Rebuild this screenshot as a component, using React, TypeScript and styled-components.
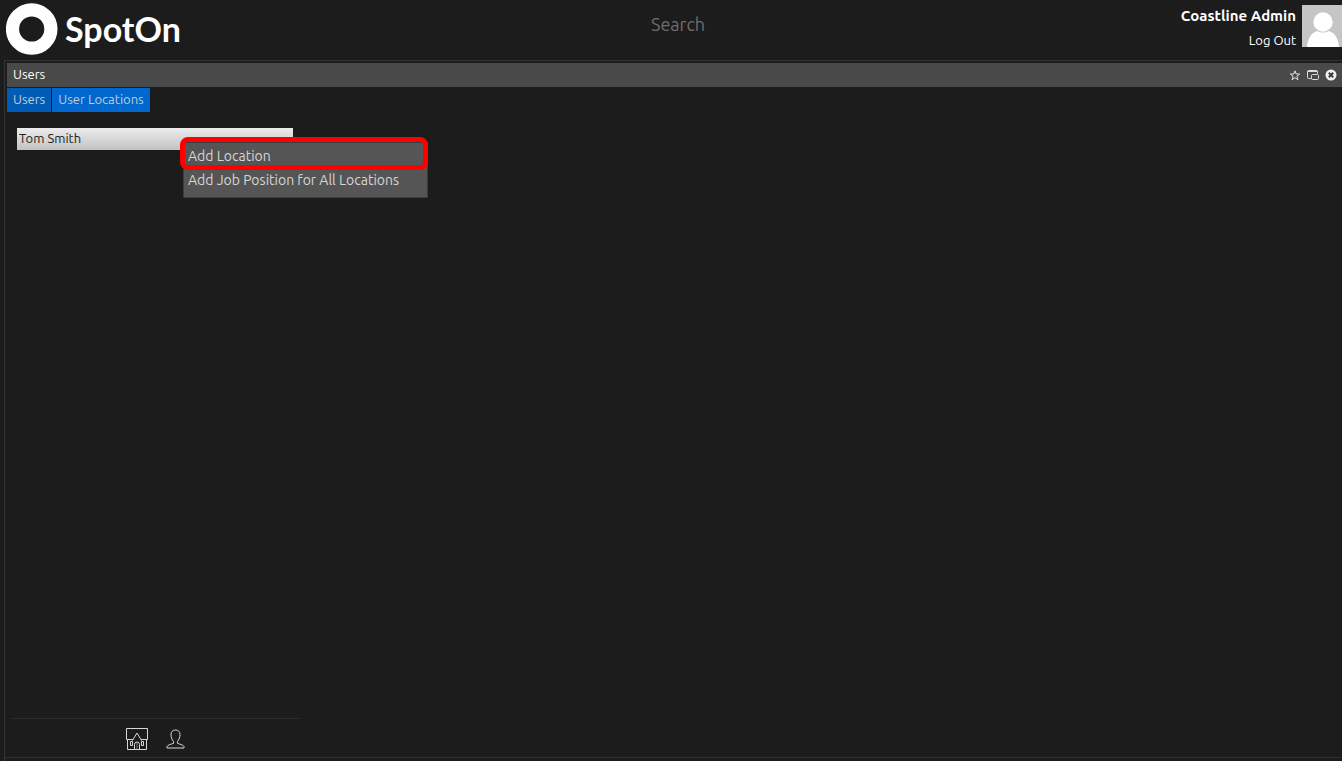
import React from "react";
import styled, { createGlobalStyle } from "styled-components";

const Global = createGlobalStyle`
  * { box-sizing: border-box; }
  body {
    margin: 0;
    background: #1c1c1c;
    color: #fff;
    font-family: Ubuntu, "Noto Sans", "Open Sans", sans-serif;
    font-size: 13px;
    line-height: 24px;
  }
  button, input { font: inherit; color: inherit; border: 0; background: none; padding: 0; margin: 0; }
`;

const Page = styled.div`
  display: flex;
  flex-direction: column;
  min-height: 100vh;
`;

const Header = styled.header`
  display: grid;
  grid-template-columns: 1fr auto 1fr;
  height: 60px;
  padding-left: 6px;
`;

const Brand = styled.a`
  display: flex;
  align-items: center;
  gap: 7px;
  height: 58px;
  color: #fff;
  text-decoration: none;
`;

const Wordmark = styled.span`
  font-family: Lato, sans-serif;
  font-size: 34px;
  font-weight: 700;
  line-height: 40px;
`;

const SearchBox = styled.input`
  width: 300px;
  height: 48px;
  font-size: 18px;
  text-align: center;
  outline: none;
  margin-left: 8px;
  &::placeholder { color: #6e6e6e; opacity: 1; }
`;

const Account = styled.div`
  display: flex;
  justify-content: flex-end;
  gap: 6px;
  padding-top: 4px;
`;

const AccountText = styled.div`
  display: flex;
  flex-direction: column;
  align-items: flex-end;
`;

const AccountName = styled.strong`
  font-size: 15px;
`;

const LogOut = styled.a`
  color: #fff;
  text-decoration: none;
`;

const Panel = styled.main`
  flex: 1;
  display: flex;
  flex-direction: column;
  margin-left: 4px;
  padding: 2px 0 3px;
  border: solid #333;
  border-width: 1px 0 0 1px;
`;

const TitleBar = styled.div`
  display: flex;
  justify-content: space-between;
  height: 24px;
  margin-left: 2px;
  padding: 0 5px 0 6px;
  background: #494949;
`;

const Title = styled.h1`
  margin: 0;
  font-size: 13px;
  font-weight: 400;
  line-height: 22px;
`;

const Tools = styled.div`
  display: flex;
  align-items: center;
  gap: 6px;
`;

const IconButton = styled.button`
  display: flex;
  cursor: pointer;
`;

const Tabs = styled.nav`
  display: flex;
  gap: 1px;
  margin: 1px 0 0 2px;
`;

const Tab = styled.button<{ $active?: boolean }>`
  height: 24px;
  padding: 0 6px 2px;
  line-height: 22px;
  background: ${(p) => (p.$active ? "#005bb5" : "#0067ce")};
  color: #c4ccd4;
`;

const Body = styled.section`
  flex: 1;
  display: flex;
  border-bottom: 1px solid #2e2e2e;
`;

const Sidebar = styled.aside`
  display: flex;
  flex-direction: column;
  width: 294px;
  padding: 16px 0 0 6px;
`;

const UserList = styled.ul`
  flex: 1;
  list-style: none;
  margin: 0;
  padding: 0 6px;
`;

const UserRow = styled.li`
  position: relative;
  height: 22px;
  padding-left: 2px;
  background: linear-gradient(#ececec, #c2c2c2);
  color: #222;
  line-height: 20px;
`;

const Menu = styled.div`
  position: absolute;
  left: 166px;
  top: 14px;
  width: 245px;
  padding: 1px 0 5px;
  background: #555;
  border: 1px solid #3c3c3c;
`;

const MenuItem = styled.button`
  display: block;
  width: 100%;
  height: 24px;
  padding-left: 4px;
  color: #d6d6d6;
  font-size: 14px;
  line-height: 24px;
  text-align: left;
  white-space: nowrap;
`;

const Highlight = styled.div`
  position: absolute;
  left: -4px;
  top: -6px;
  width: 248px;
  height: 33px;
  border: 5px solid #fe0000;
  border-radius: 8px;
  pointer-events: none;
`;

const SidebarFooter = styled.div`
  display: flex;
  justify-content: center;
  align-items: center;
  gap: 18px;
  height: 39px;
  padding-top: 2px;
  border-top: 1px solid #2e2e2e;
`;

const Mark = () => (
  <svg width="52" height="52" viewBox="0 0 52 52" aria-hidden="true">
    <circle cx="25.700" cy="26" r="19.2" fill="none" stroke="#fff" strokeWidth="13.2" />
  </svg>
);

const Avatar = () => (
  <svg width="40" height="43" viewBox="0 0 40 43" role="img" aria-label="Profile picture">
    <path fill="#c5c5c5" d="M0 1h40v42H0z" />
    <circle cx="21" cy="18" r="9.7" fill="#fff" />
    <path fill="#fff" d="M5 43c.6-9 4.500-14 10-16q6 3 12 0c5.500 2 9.500 7 10 16z" />
  </svg>
);

const StarIcon = () => (
  <svg width="12" height="12" viewBox="0 0 12 12" fill="none" stroke="#e4e4e4">
    <path d="M6 1.800 7.200 5h3.500L7.900 7.200 9 10.700 6 8.700 3 10.700l1.100-3.500L1.300 5h3.500z" />
  </svg>
);

const WindowsIcon = () => (
  <svg width="12" height="12" viewBox="0 0 12 12" fill="none" stroke="#dcdcdc">
    <path d="M4 9.500H1.500q-1 0-1-1v-6q0-1 1-1h8q1 0 1 1v2M.5 2.500h10" />
    <rect x="4.500" y="5.500" width="7" height="5" rx="1" />
  </svg>
);

const CloseIcon = () => (
  <svg width="12" height="12" viewBox="0 0 12 12">
    <circle cx="6" cy="6" r="5.500" fill="#f2f2f2" />
    <path d="m3.800 3.800 4.400 4.400m0-4.400L3.800 8.200" stroke="#3c3c3c" strokeWidth="2" />
  </svg>
);

const HouseIcon = () => (
  <svg width="22" height="22" viewBox="0 0 22 22" fill="none" stroke="#d8d8d8">
    <path d="M7 11.500H.5V.5h21v11H15" />
    <path d="M1.500 11.500v10h19v-10M6.500 12.500 11 5l4.500 7.500" />
    <path d="M8.500 21.500v-5q0-2.500 2.500-2.500t2.500 2.500v5M4.500 13.500h2v4h-2zM15.500 13.500h2v4h-2z" />
    <path d="M11 15v6" stroke="#777" />
  </svg>
);

const PersonIcon = () => (
  <svg width="19" height="20" viewBox="0 0 19 20" fill="none" stroke="#d8d8d8">
    <path d="M7.500 12.500C5.800 10.500 5 8 5 5.500 5 2.500 6.800 1 9.500 1S14 2.500 14 5.500c0 2.500-.8 5-2.500 7v1.800c2.500 1 6 1.700 6.500 3.200v1.500H1v-1.500c.5-1.500 4-2.200 6.500-3.200z" />
  </svg>
);

export default function App() {
  return (
    <>
      <Global />
      <Page>
        <Header>
          <Brand href="#">
            <Mark />
            <Wordmark>SpotOn</Wordmark>
          </Brand>
          <SearchBox type="text" placeholder="Search" aria-label="Search" />
          <Account>
            <AccountText>
              <AccountName>Coastline Admin</AccountName>
              <LogOut href="#">Log Out</LogOut>
            </AccountText>
            <Avatar />
          </Account>
        </Header>
        <Panel>
          <TitleBar>
            <Title>Users</Title>
            <Tools>
              <IconButton aria-label="Favorite"><StarIcon /></IconButton>
              <IconButton aria-label="Open in window"><WindowsIcon /></IconButton>
              <IconButton aria-label="Close"><CloseIcon /></IconButton>
            </Tools>
          </TitleBar>
          <Tabs>
            <Tab $active>Users</Tab>
            <Tab>User Locations</Tab>
          </Tabs>
          <Body>
            <Sidebar>
              <UserList>
                <UserRow>
                  Tom Smith
                  <Menu>
                    <MenuItem>Add Location</MenuItem>
                    <MenuItem>Add Job Position for All Locations</MenuItem>
                    <Highlight />
                  </Menu>
                </UserRow>
              </UserList>
              <SidebarFooter>
                <IconButton aria-label="Locations"><HouseIcon /></IconButton>
                <IconButton aria-label="Users"><PersonIcon /></IconButton>
              </SidebarFooter>
            </Sidebar>
          </Body>
        </Panel>
      </Page>
    </>
  );
}
